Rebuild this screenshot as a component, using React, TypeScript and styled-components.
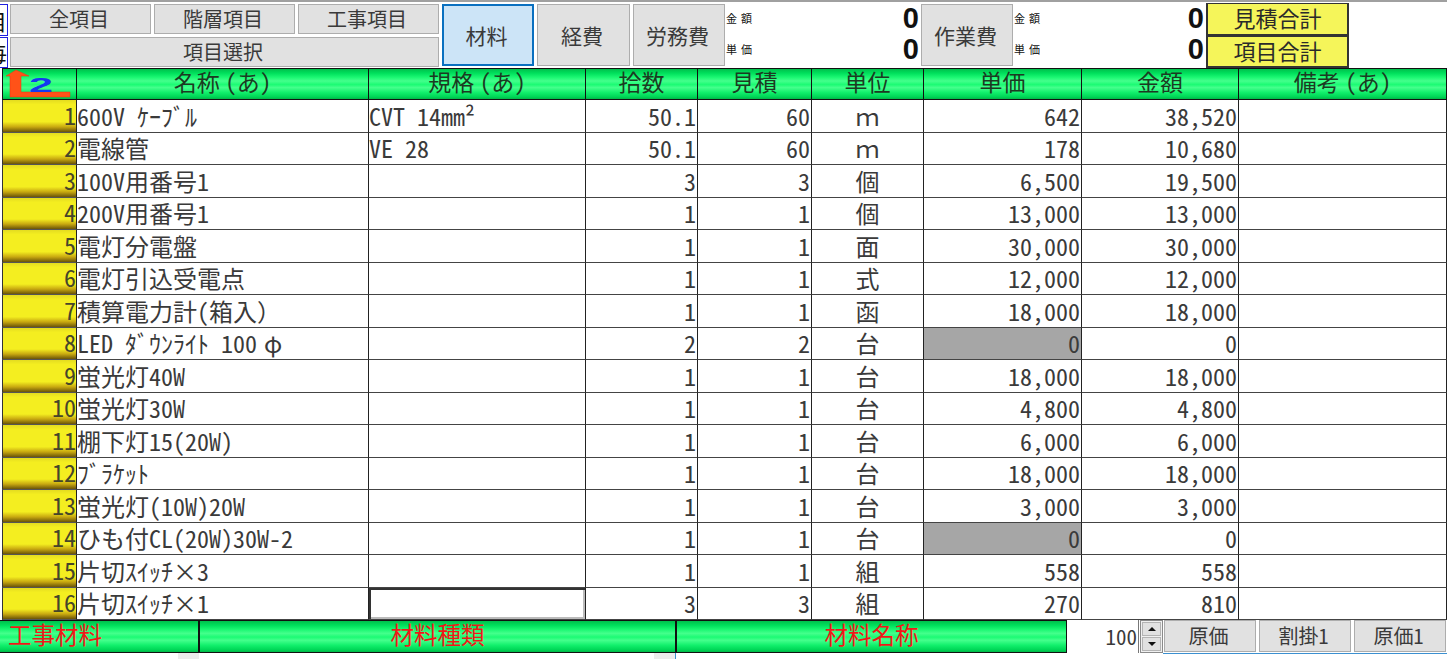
import React from "react";
import styled, { createGlobalStyle } from "styled-components";

const GlobalStyle = createGlobalStyle`
  html, body { margin: 0; padding: 0; background: #fff; overflow: hidden; }
  body {
    font-family: "Noto Sans Mono CJK JP", "Noto Sans CJK JP", "Liberation Sans", sans-serif;
    font-weight: 300;
    color: #222;
  }
`;

const Page = styled.div`
  width: 1447px;
  height: 659px;
  overflow: hidden;
  display: flex;
  flex-direction: column;
`;

const TopBar = styled.div`
  height: 68px;
  box-sizing: border-box;
  border-top: 2px solid #a0a0a0;
  padding-top: 2px;
  display: flex;
`;

const LeftStub = styled.div`
  width: 8px;
  display: flex;
  flex-direction: column;
  gap: 1px;
  margin-right: 2px;
`;

const StubBox = styled.div`
  flex: 1;
  box-sizing: border-box;
  border: 1px solid #2020e0;
  border-left: none;
  overflow: hidden;
  display: flex;
  justify-content: flex-end;
  align-items: center;
  font-size: 22px;
  line-height: 1;
  white-space: nowrap;
  color: #111;
`;

const ItemButtons = styled.div`
  width: 429px;
  display: grid;
  grid-template-columns: repeat(3, 141px);
  grid-template-rows: 30px 30px;
  column-gap: 3px;
  row-gap: 3px;
`;

const Button = styled.div<{ $span?: number; $size?: number }>`
  grid-column: span ${(p) => p.$span ?? 1};
  box-sizing: border-box;
  background: #e1e1e1;
  border: 1px solid #adadad;
  padding-right: 3px;
  display: flex;
  align-items: center;
  justify-content: center;
  font-size: ${(p) => p.$size ?? 20}px;
  line-height: 1;
  color: #3a3a3a;
`;

const CostButton = styled(Button)<{ $active?: boolean; $width: number }>`
  width: ${(p) => p.$width}px;
  height: 62px;
  font-size: 21px;
  flex: none;
  ${(p) => p.$active && "background: #cce4f7; border: 2px solid #0a70c0;"}
`;

const CostGroup = styled.div`
  display: flex;
  gap: 3px;
  margin-left: 3px;
`;

const Summary = styled.div<{ $width: number }>`
  width: ${(p) => p.$width}px;
  height: 62px;
  flex: none;
  display: grid;
  grid-template-rows: 29px 33px;
`;

const SummaryLine = styled.div`
  display: flex;
  align-items: center;
  justify-content: space-between;
  padding: 0 2px 0 1px;
`;

const SummaryLabel = styled.span`
  font-size: 11px;
  font-weight: 500;
  letter-spacing: 4px;
  margin-bottom: 2px;
  color: #111;
`;

const SummaryValue = styled.span`
  font-family: "Liberation Sans", sans-serif;
  font-size: 29px;
  font-weight: 700;
  line-height: 1;
  color: #111;
`;

const TotalStack = styled.div`
  display: flex;
  flex-direction: column;
  margin-top: -1px;
  height: 65px;
`;

const TotalButton = styled.div`
  width: 143px;
  flex: 1;
  box-sizing: border-box;
  background: #f5f55a;
  border: 2px solid #333;
  border-top-width: 1px;
  padding-bottom: 3px;
  display: flex;
  align-items: center;
  justify-content: center;
  font-size: 22px;
  line-height: 1;
  color: #2a2a2a;
`;

const COLUMNS = "75px 292px 217px 112px 114px 112px 158px 157px 1fr";

const Grid = styled.div`
  margin-left: 2px;
  display: grid;
  grid-template-columns: ${COLUMNS};
  grid-template-rows: 32px repeat(16, 32.5px);
`;

const greenBands = `linear-gradient(180deg,
  #00c04c 0%, #00e05c 14%, #1cf873 28%, #44ff8c 40%, #1cfb74 52%, #44ff8c 62%, #12f06c 78%, #00d858 92%, #00b848 100%)`;

const HeaderCell = styled.div`
  box-sizing: border-box;
  background: ${greenBands};
  border-top: 1px solid #111;
  border-right: 1px solid #111;
  border-bottom: 1px solid #111;
  padding-bottom: 5px;
  display: flex;
  align-items: center;
  justify-content: center;
  font-size: 23px;
  line-height: 1;
  word-spacing: -6px;
  color: #1c3a22;
  white-space: pre;
`;

const CornerCell = styled(HeaderCell)`
  padding-bottom: 0;
  border-left: 1px solid #111;
`;

const IndexCell = styled.div`
  box-sizing: border-box;
  background: linear-gradient(180deg, #e4dc20 0%, #f4ee20 14%, #f4ee20 68%, #c8a810 84%, #6a5408 100%);
  border-left: 1px solid #333;
  border-right: 1px solid #222;
  border-bottom: 1px solid #555;
  padding-bottom: 2px;
  display: flex;
  align-items: center;
  justify-content: flex-end;
  font-size: 24px;
  line-height: 1;
  color: #45452a;
`;

const Cell = styled.div<{ $align?: "left" | "right" | "center"; $shaded?: boolean; $focused?: boolean }>`
  box-sizing: border-box;
  background: ${(p) => (p.$shaded ? "#a6a6a6" : "#fff")};
  border-right: 1px solid #222;
  border-bottom: 1px solid #444;
  display: flex;
  align-items: center;
  justify-content: ${(p) =>
    p.$align === "right" ? "flex-end" : p.$align === "center" ? "center" : "flex-start"};
  padding-right: ${(p) => (p.$align === "right" ? "1px" : "0")};
  font-size: 24px;
  line-height: 1;
  white-space: pre;
  color: #3a3a3a;
  ${(p) => p.$focused && "box-shadow: inset 2px 2px 0 #333, inset -2px -2px 0 #bbb;"}
`;

const Wide = styled.span`
  display: inline-block;
  width: 24px;
  margin-left: 4px;
  text-align: center;
`;

const Footer = styled.div`
  height: 33px;
  display: flex;
  align-items: stretch;
`;

const FooterLabel = styled.div<{ $width: number; $align?: string }>`
  width: ${(p) => p.$width}px;
  flex: none;
  box-sizing: border-box;
  background: ${greenBands};
  border: 1px solid #111;
  border-left: ${(p) => (p.$align === "left" ? "none" : "1px solid #111")};
  display: flex;
  align-items: center;
  justify-content: ${(p) => (p.$align === "left" ? "flex-start" : "center")};
  padding-left: ${(p) => (p.$align === "left" ? "8px" : "0")};
  padding-bottom: 3px;
  font-size: 23.5px;
  line-height: 1;
  color: #f01818;
`;

const PercentInput = styled.div`
  width: 71px;
  margin-left: 1px;
  flex: none;
  box-sizing: border-box;
  background: #fff;
  border-right: 1px solid #777;
  display: flex;
  align-items: center;
  justify-content: flex-end;
  padding-right: 1px;
  font-size: 21px;
  line-height: 1;
  color: #3a3a3a;
`;

const Spinner = styled.div`
  width: 23px;
  margin-left: 1px;
  flex: none;
  box-sizing: border-box;
  border: 1px solid #8a8a8a;
  background: #f0f0f0;
  padding: 1px;
  display: grid;
  grid-template-rows: 1fr 1fr;
  gap: 1px;
`;

const SpinButton = styled.div`
  background: #e1e1e1;
  border: 1px solid #b4b4b4;
  display: flex;
  align-items: center;
  justify-content: center;
`;

const Arrow = styled.span<{ $down?: boolean }>`
  width: 0;
  height: 0;
  border-left: 4px solid transparent;
  border-right: 4px solid transparent;
  ${(p) => (p.$down ? "border-top: 4px solid #111;" : "border-bottom: 4px solid #111;")}
`;

const FooterButtons = styled.div`
  display: flex;
  gap: 3px;
  margin-left: 1px;
  padding-bottom: 1px;
`;

const FooterButton = styled(Button)`
  width: 92px;
`;

const Strip = styled.div`
  flex: 1;
  display: grid;
  grid-template-columns: 178px 21px 455px 21px 488px 284px;
`;

const StripPart = styled.div<{ $gray?: boolean; $blueTop?: boolean; $blueLeft?: boolean }>`
  box-sizing: border-box;
  background: ${(p) => (p.$gray ? "#ececec" : "#fff")};
  ${(p) => p.$blueTop && "border-top: 1px solid #3c90d0;"}
  ${(p) => p.$blueLeft && "border-left: 1px solid #3c90d0;"}
`;

const CornerIcon = () => (
  <svg width="70" height="30" viewBox="0 0 70 30">
    <path d="M11 1 L24 7 H16 V23 H65 V28 H5 V7 H1 Z" fill="#ff5218" stroke="#f03010" strokeWidth="0.5" />
    <text
      x="24"
      y="23"
      fontFamily="Liberation Sans, sans-serif"
      fontWeight="700"
      fontSize="21"
      textLength="24"
      lengthAdjust="spacingAndGlyphs"
      fill="#1438f0"
    >
      2
    </text>
  </svg>
);

type Row = {
  name: React.ReactNode;
  spec?: string;
  count: string;
  quote: string;
  unit: string;
  price: string;
  amount: string;
  shaded?: boolean;
};

const ROWS: Row[] = [
  { name: "600V ｹｰﾌﾞﾙ", spec: "CVT 14mm²", count: "50.1", quote: "60", unit: "ｍ", price: "642", amount: "38,520" },
  { name: "電線管", spec: "VE 28", count: "50.1", quote: "60", unit: "ｍ", price: "178", amount: "10,680" },
  { name: "100V用番号1", count: "3", quote: "3", unit: "個", price: "6,500", amount: "19,500" },
  { name: "200V用番号1", count: "1", quote: "1", unit: "個", price: "13,000", amount: "13,000" },
  { name: "電灯分電盤", count: "1", quote: "1", unit: "面", price: "30,000", amount: "30,000" },
  { name: "電灯引込受電点", count: "1", quote: "1", unit: "式", price: "12,000", amount: "12,000" },
  { name: "積算電力計(箱入）", count: "1", quote: "1", unit: "函", price: "18,000", amount: "18,000" },
  { name: <>LED ﾀﾞｳﾝﾗｲﾄ 100<Wide>φ</Wide></>, count: "2", quote: "2", unit: "台", price: "0", amount: "0", shaded: true },
  { name: "蛍光灯40W", count: "1", quote: "1", unit: "台", price: "18,000", amount: "18,000" },
  { name: "蛍光灯30W", count: "1", quote: "1", unit: "台", price: "4,800", amount: "4,800" },
  { name: "棚下灯15(20W)", count: "1", quote: "1", unit: "台", price: "6,000", amount: "6,000" },
  { name: "ﾌﾞﾗｹｯﾄ", count: "1", quote: "1", unit: "台", price: "18,000", amount: "18,000" },
  { name: "蛍光灯(10W)20W", count: "1", quote: "1", unit: "台", price: "3,000", amount: "3,000" },
  { name: "ひも付CL(20W)30W-2", count: "1", quote: "1", unit: "台", price: "0", amount: "0", shaded: true },
  { name: "片切ｽｲｯﾁ×3", count: "1", quote: "1", unit: "組", price: "558", amount: "558" },
  { name: "片切ｽｲｯﾁ×1", count: "3", quote: "3", unit: "組", price: "270", amount: "810" },
];

const HEADERS = ["名称 (あ)", "規格 (あ)", "拾数", "見積", "単位", "単価", "金額", "備考 (あ)"];

const SummaryBlock = ({ width }: { width: number }) => (
  <Summary $width={width}>
    <SummaryLine>
      <SummaryLabel>金額</SummaryLabel>
      <SummaryValue>0</SummaryValue>
    </SummaryLine>
    <SummaryLine>
      <SummaryLabel>単価</SummaryLabel>
      <SummaryValue>0</SummaryValue>
    </SummaryLine>
  </Summary>
);

export default function App() {
  return (
    <Page>
      <GlobalStyle />
      <TopBar>
        <LeftStub>
          <StubBox>目</StubBox>
          <StubBox>毎</StubBox>
        </LeftStub>
        <ItemButtons>
          <Button>全項目</Button>
          <Button>階層項目</Button>
          <Button>工事項目</Button>
          <Button $span={3}>項目選択</Button>
        </ItemButtons>
        <CostGroup>
          <CostButton $width={92} $active>材料</CostButton>
          <CostButton $width={93}>経費</CostButton>
          <CostButton $width={92}>労務費</CostButton>
        </CostGroup>
        <SummaryBlock width={196} />
        <CostButton $width={92}>作業費</CostButton>
        <SummaryBlock width={193} />
        <TotalStack>
          <TotalButton>見積合計</TotalButton>
          <TotalButton>項目合計</TotalButton>
        </TotalStack>
      </TopBar>
      <Grid>
        <CornerCell><CornerIcon /></CornerCell>
        {HEADERS.map((h) => (
          <HeaderCell key={h}>{h}</HeaderCell>
        ))}
        {ROWS.map((r, i) => (
          <React.Fragment key={i}>
            <IndexCell>{i + 1}</IndexCell>
            <Cell>{r.name}</Cell>
            <Cell $focused={i === 15}>{r.spec}</Cell>
            <Cell $align="right">{r.count}</Cell>
            <Cell $align="right">{r.quote}</Cell>
            <Cell $align="center">{r.unit}</Cell>
            <Cell $align="right" $shaded={r.shaded}>{r.price}</Cell>
            <Cell $align="right">{r.amount}</Cell>
            <Cell />
          </React.Fragment>
        ))}
      </Grid>
      <Footer>
        <FooterLabel $width={199} $align="left">工事材料</FooterLabel>
        <FooterLabel $width={477}>材料種類</FooterLabel>
        <FooterLabel $width={391}>材料名称</FooterLabel>
        <PercentInput>100</PercentInput>
        <Spinner>
          <SpinButton><Arrow /></SpinButton>
          <SpinButton><Arrow $down /></SpinButton>
        </Spinner>
        <FooterButtons>
          <FooterButton>原価</FooterButton>
          <FooterButton>割掛1</FooterButton>
          <FooterButton>原価1</FooterButton>
        </FooterButtons>
      </Footer>
      <Strip>
        <StripPart />
        <StripPart $gray />
        <StripPart />
        <StripPart $gray />
        <StripPart $blueLeft />
        <StripPart $blueTop />
      </Strip>
    </Page>
  );
}
